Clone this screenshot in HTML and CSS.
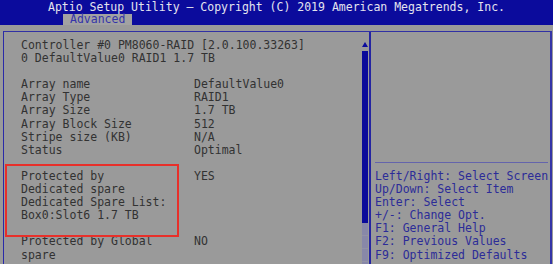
FILE: index.html
```html
<!DOCTYPE html>
<html>
<head>
<meta charset="utf-8">
<link rel="stylesheet" href="styles.css">
</head>
<body>
<div class="screen">
  <header class="titlebar">Aptio Setup Utility – Copyright (C) 2019 American Megatrends, Inc.</header>
  <nav class="tabs"><span class="tab">Advanced</span></nav>
  <main class="body">
    <div class="frame">
      <section class="left">
        <div class="content">
          <div class="line">Controller #0 PM8060-RAID [2.0.100.33263]</div>
          <div class="line">0 DefaultValue0 RAID1 1.7 TB</div>
          <div class="line"></div>
          <div class="row"><span class="k">Array name</span><span class="v">DefaultValue0</span></div>
          <div class="row"><span class="k">Array Type</span><span class="v">RAID1</span></div>
          <div class="row"><span class="k">Array Size</span><span class="v">1.7 TB</span></div>
          <div class="row"><span class="k">Array Block Size</span><span class="v">512</span></div>
          <div class="row"><span class="k">Stripe size (KB)</span><span class="v">N/A</span></div>
          <div class="row"><span class="k">Status</span><span class="v">Optimal</span></div>
          <div class="line"></div>
          <div class="group marked">
            <div class="row"><span class="k">Protected by</span><span class="v">YES</span></div>
            <div class="line">Dedicated spare</div>
            <div class="line">Dedicated Spare List:</div>
            <div class="line">Box0:Slot6 1.7 TB</div>
          </div>
          <div class="line"></div>
          <div class="row"><span class="k">Protected by Global</span><span class="v">NO</span></div>
          <div class="line">spare</div>
        </div>
        <div class="scroll">
          <span class="arrow"></span>
          <span class="thumb"></span>
          <span class="track"></span>
        </div>
      </section>
      <aside class="right">
        <div class="desc"></div>
        <div class="help">
          <div class="line">Left/Right: Select Screen</div>
          <div class="line">Up/Down: Select Item</div>
          <div class="line">Enter: Select</div>
          <div class="line">+/-: Change Opt.</div>
          <div class="line">F1: General Help</div>
          <div class="line">F2: Previous Values</div>
          <div class="line">F9: Optimized Defaults</div>
        </div>
      </aside>
    </div>
  </main>
</div>
</body>
</html>
```

FILE: styles.css
```css
* { box-sizing: border-box; margin: 0; padding: 0; }
html, body { width: 553px; height: 264px; overflow: hidden; background: #9a9a9a; }
body {
  font-family: "DejaVu Sans Mono", "Liberation Mono", monospace;
  font-size: 11.5px;
  line-height: 13.1px;
}
.screen { width: 553px; height: 264px; display: flex; flex-direction: column; }
.titlebar {
  background: #0b0b9c;
  color: #e4e4ee;
  height: 14px;
  line-height: 14px;
  text-align: center;
  white-space: pre;
}
.tabs {
  background: #0b0b9c;
  height: 11px;
  padding-left: 63px;
  display: flex;
}
.tab {
  background: #a2a2a2;
  color: #3434aa;
  padding: 0 7px;
  line-height: 11px;
  height: 11px;
}
.body {
  flex: 1;
  background: #9a9a9a;
  padding: 6px 1px 0 3px;
  display: flex;
  min-height: 0;
}
.frame {
  flex: 1;
  display: flex;
  border-top: 1px solid #3030a4;
  border-left: 1px solid #2a2aa8;
  border-right: 2px solid #3434a6;
}
.left {
  width: 367px;
  display: flex;
  border-right: 2px solid #2424a2;
}
.content {
  flex: 1;
  padding: 7px 0 0 17px;
  color: #323232;
}
.line { height: 13.1px; white-space: pre; }
.row { display: flex; height: 13.1px; white-space: pre; }
.k { width: 173px; }
.group { position: relative; }
.marked::after {
  content: "";
  position: absolute;
  left: -16px;
  top: -6px;
  width: 170px;
  height: 69px;
  border: 2px solid #e8302a;
}
.scroll {
  width: 7px;
  margin: 0 1px 0 0;
  display: flex;
  flex-direction: column;
  align-items: center;
  padding-top: 10px;
}
.arrow {
  width: 0; height: 0;
  border-left: 3px solid transparent;
  border-right: 3px solid transparent;
  border-bottom: 5px solid #0c0c9c;
}
.thumb {
  width: 6px;
  height: 172px;
  margin-top: 4px;
  background: #0a0a9a;
}
.track {
  width: 6px;
  flex: 1;
  background: repeating-linear-gradient(to bottom, #8888a8 0 12px, #9292a6 12px 13px);
}
.right {
  flex: 1;
  display: flex;
  flex-direction: column;
  padding: 0 2px 0 4px;
  color: #2c2c98;
}
.desc {
  height: 131px;
  border-bottom: 1px solid #6464ac;
}
.help { padding-top: 7px; }
```
